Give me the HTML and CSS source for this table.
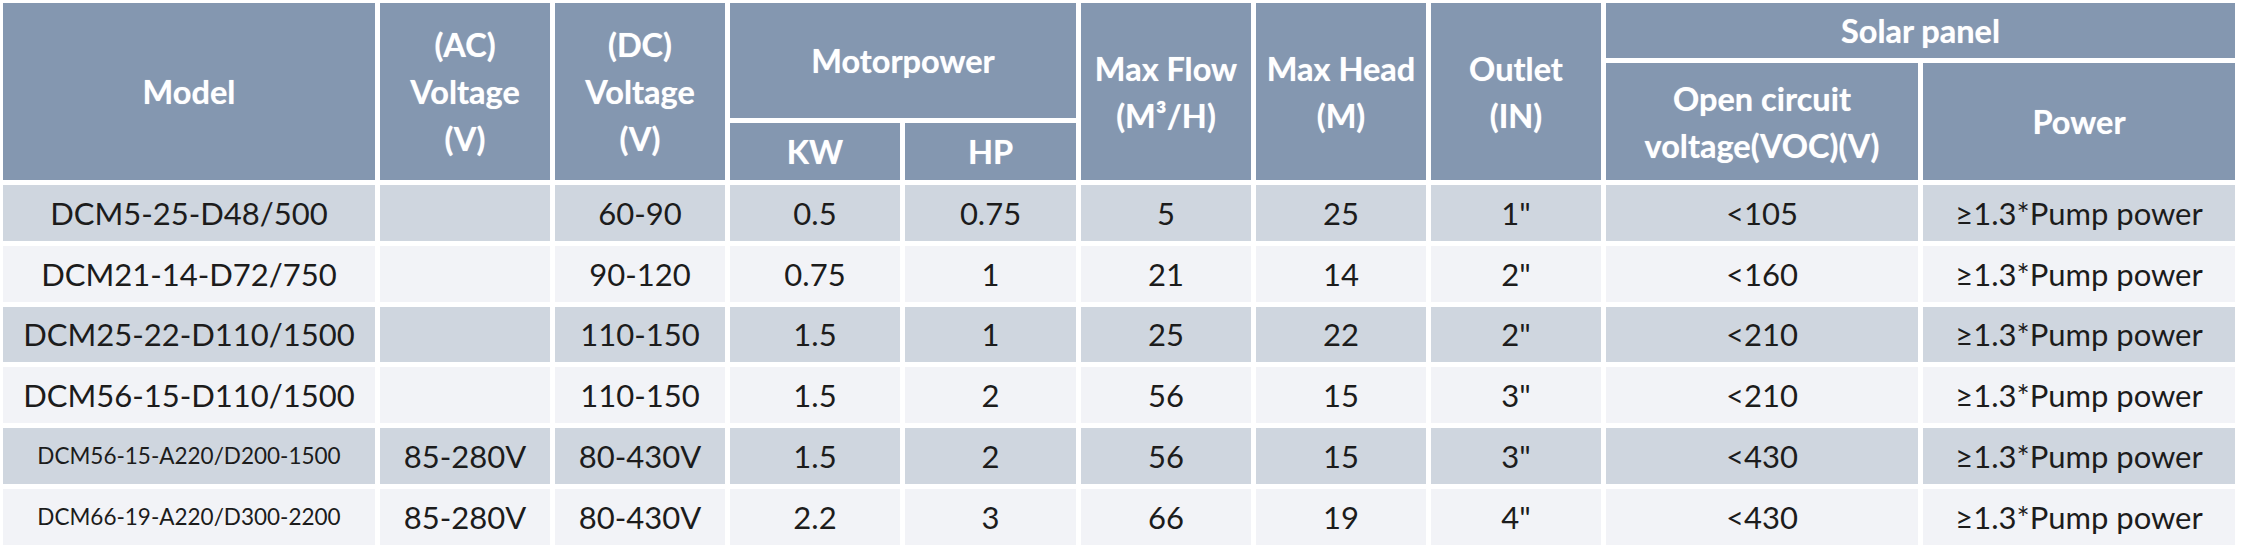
FILE: index.html
```html
<!DOCTYPE html>
<html lang="en">
<head>
<meta charset="utf-8">
<title>DC Solar Pump Specifications</title>
<link rel="stylesheet" href="styles.css">
</head>
<body>
<table class="spec">
  <colgroup>
    <col class="c-model">
    <col class="c-std"><col class="c-std"><col class="c-std"><col class="c-hp">
    <col class="c-std"><col class="c-std"><col class="c-std">
    <col class="c-wide"><col class="c-wide">
  </colgroup>
  <thead>
    <tr class="h1">
      <th rowspan="3">Model</th>
      <th rowspan="3">(AC)<br>Voltage<br>(V)</th>
      <th rowspan="3">(DC)<br>Voltage<br>(V)</th>
      <th rowspan="2" colspan="2">Motorpower</th>
      <th rowspan="3">Max Flow<br>(M³/H)</th>
      <th rowspan="3">Max Head<br>(M)</th>
      <th rowspan="3">Outlet<br>(IN)</th>
      <th colspan="2">Solar panel</th>
    </tr>
    <tr class="h2">
      <th rowspan="2">Open circuit<br>voltage(VOC)(V)</th>
      <th rowspan="2">Power</th>
    </tr>
    <tr class="h3">
      <th>KW</th>
      <th>HP</th>
    </tr>
  </thead>
  <tbody>
    <tr class="odd">
      <td>DCM5-25-D48/500</td><td></td><td>60-90</td><td>0.5</td><td>0.75</td><td>5</td><td>25</td><td>1"</td><td>&lt;105</td><td>≥1.3*Pump power</td>
    </tr>
    <tr class="even">
      <td>DCM21-14-D72/750</td><td></td><td>90-120</td><td>0.75</td><td>1</td><td>21</td><td>14</td><td>2"</td><td>&lt;160</td><td>≥1.3*Pump power</td>
    </tr>
    <tr class="odd">
      <td>DCM25-22-D110/1500</td><td></td><td>110-150</td><td>1.5</td><td>1</td><td>25</td><td>22</td><td>2"</td><td>&lt;210</td><td>≥1.3*Pump power</td>
    </tr>
    <tr class="even">
      <td>DCM56-15-D110/1500</td><td></td><td>110-150</td><td>1.5</td><td>2</td><td>56</td><td>15</td><td>3"</td><td>&lt;210</td><td>≥1.3*Pump power</td>
    </tr>
    <tr class="odd">
      <td class="small">DCM56-15-A220/D200-1500</td><td>85-280V</td><td>80-430V</td><td>1.5</td><td>2</td><td>56</td><td>15</td><td>3"</td><td>&lt;430</td><td>≥1.3*Pump power</td>
    </tr>
    <tr class="even">
      <td class="small">DCM66-19-A220/D300-2200</td><td>85-280V</td><td>80-430V</td><td>2.2</td><td>3</td><td>66</td><td>19</td><td>4"</td><td>&lt;430</td><td>≥1.3*Pump power</td>
    </tr>
  </tbody>
</table>
</body>
</html>
```

FILE: styles.css
```css
html, body {
  margin: 0;
  padding: 0;
  background: #ffffff;
}

.spec {
  margin: -2px 0 0 -2px;
  border-collapse: separate;
  border-spacing: 5px;
  table-layout: fixed;
  width: 2242px;
  font-family: Lato, "Liberation Sans", sans-serif;
}

.c-model { width: 372px; }
.c-std { width: 170px; }
.c-hp { width: 171px; }
.c-wide { width: 312px; }

.spec th,
.spec td {
  padding: 0;
  text-align: center;
  vertical-align: middle;
  white-space: nowrap;
}

.spec th {
  background: #8497b0;
  color: #ffffff;
  font-weight: 700;
  font-size: 32.5px;
  line-height: 47px;
  text-shadow: 0 0 1px rgba(255, 255, 255, 0.6);
}

.h1 { height: 55px; }
.h2 { height: 55px; }
.h3 { height: 57px; }

.spec td {
  height: 55.8px;
  color: #1c1c1c;
  font-size: 31px;
  line-height: 36px;
}

.spec td.small {
  font-size: 22.5px;
}

.spec td.wide-text {
  font-size: 32px;
}

.odd td { background: #cfd6df; }
.even td { background: #f2f3f7; }
```
